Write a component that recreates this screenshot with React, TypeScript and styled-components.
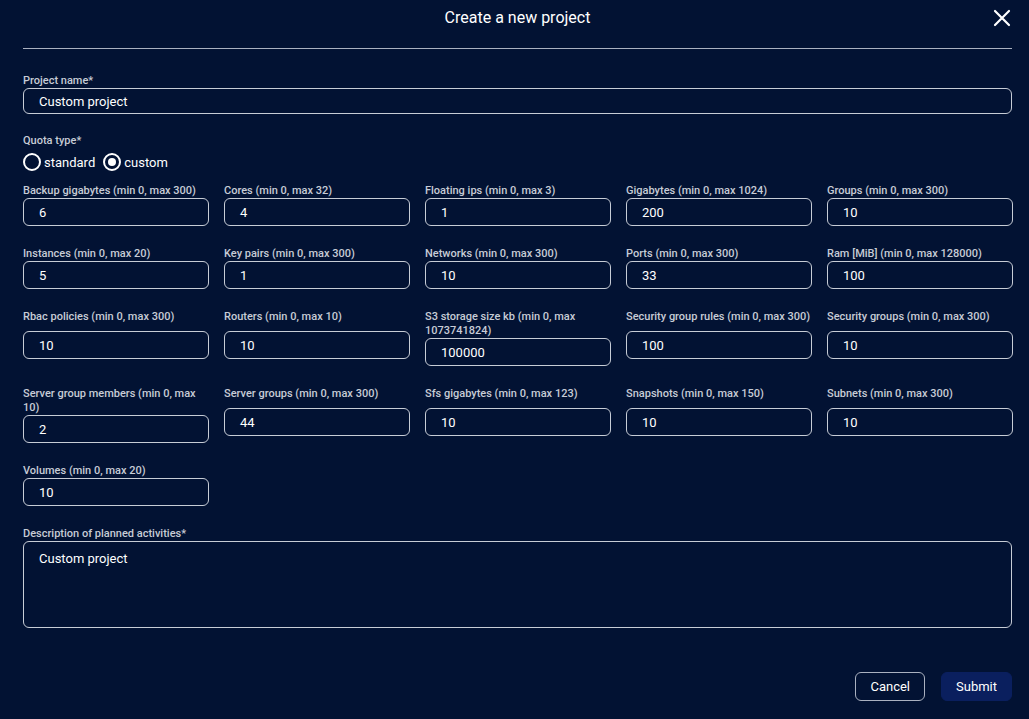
import React from "react";
import styled, { createGlobalStyle } from "styled-components";

const Global = createGlobalStyle`
  html, body { margin: 0; background: #021233; }
  body { font-family: Roboto, "Liberation Sans", sans-serif; color: #fff; }
  * { box-sizing: border-box; }
`;

const Page = styled.div`
  width: 1029px; height: 719px; padding: 0 17px 0 23px;
  display: flex; flex-direction: column;
`;
const Header = styled.div`
  position: relative; height: 49px; border-bottom: 1px solid #aab1c0;
  display: flex; justify-content: center; padding-top: 8px;
  font-size: 16px; color: #fff;
`;
const Close = styled.button`
  position: absolute; right: 0; top: 8px; background: none; border: 0; padding: 0;
  width: 20px; height: 20px; cursor: pointer;
`;
const Label = styled.div`
  font-size: 11px; line-height: 14px; color: #c7ccd6; font-weight: 500;
`;
const Input = styled.div<{ $h?: number }>`
  height: ${p => p.$h ?? 28}px; border: 1px solid #c7ccd6; border-radius: 6px;
  padding: 0 15px; display: flex; align-items: center; font-size: 13px; color: #fff;
`;
const TextArea = styled(Input)`
  align-items: flex-start; padding-top: 9px;
`;
const Section = styled.div<{ $mt: number }>`
  margin-top: ${p => p.$mt}px; display: flex; flex-direction: column; gap: 0px;
`;
const Radios = styled.div`
  display: flex; align-items: center; gap: 8px; margin-top: 5px; font-size: 13px;
`;
const Radio = styled.span<{ $on?: boolean }>`
  width: 18px; height: 18px; border-radius: 50%; border: 2px solid #fff;
  display: inline-flex; align-items: center; justify-content: center; margin-right: 3px;
  &::after { content: ""; width: 8px; height: 8px; border-radius: 50%; background: ${p => p.$on ? "#fff" : "transparent"}; }
`;
const Opt = styled.label` display: flex; align-items: center; margin-right: 0px; `;
const Grid = styled.div`
  margin-top: 13px; display: grid; grid-template-columns: repeat(5, 186px);
  column-gap: 15px; row-gap: 21px;
`;
const Cell = styled.div` display: flex; flex-direction: column; `;
const Slot = styled.div` flex: 1; display: flex; flex-direction: column; justify-content: center; `;
const Footer = styled.div`
  margin-top: auto; margin-bottom: 18px; display: flex; justify-content: flex-end; gap: 16px;
`;
const Btn = styled.button<{ $primary?: boolean }>`
  height: 29px; padding: 0 14px; border-radius: 6px; font-family: inherit; font-size: 13px;
  color: #fff; background: ${p => p.$primary ? "#0a1f5e" : "transparent"};
  border: 1px solid ${p => p.$primary ? "#0a1f5e" : "#aab1c0"};
`;

const fields: [string, string][] = [
  ["Backup gigabytes (min 0, max 300)", "6"], ["Cores (min 0, max 32)", "4"], ["Floating ips (min 0, max 3)", "1"], ["Gigabytes (min 0, max 1024)", "200"], ["Groups (min 0, max 300)", "10"],
  ["Instances (min 0, max 20)", "5"], ["Key pairs (min 0, max 300)", "1"], ["Networks (min 0, max 300)", "10"], ["Ports (min 0, max 300)", "33"], ["Ram [MiB] (min 0, max 128000)", "100"],
  ["Rbac policies (min 0, max 300)", "10"], ["Routers (min 0, max 10)", "10"], ["S3 storage size kb (min 0, max 1073741824)", "100000"], ["Security group rules (min 0, max 300)", "100"], ["Security groups (min 0, max 300)", "10"],
  ["Server group members (min 0, max 10)", "2"], ["Server groups (min 0, max 300)", "44"], ["Sfs gigabytes (min 0, max 123)", "10"], ["Snapshots (min 0, max 150)", "10"], ["Subnets (min 0, max 300)", "10"],
  ["Volumes (min 0, max 20)", "10"],
];

export default function App() {
  return (
    <Page>
      <Global />
      <Header>
        Create a new project
        <Close aria-label="close">
          <svg width="20" height="20" viewBox="0 0 20 20"><path d="M3 3L17 17M17 3L3 17" stroke="#fff" strokeWidth="2.2" strokeLinecap="round" /></svg>
        </Close>
      </Header>
      <Section $mt={25}>
        <Label>Project name*</Label>
        <Input $h={26}>Custom project</Input>
      </Section>
      <Section $mt={20}>
        <Label>Quota type*</Label>
        <Radios>
          <Opt><Radio />standard</Opt>
          <Opt><Radio $on />custom</Opt>
        </Radios>
      </Section>
      <Grid>
        {fields.map(([l, v]) => (
          <Cell key={l}>
            <Label>{l}</Label>
            <Slot><Input>{v}</Input></Slot>
          </Cell>
        ))}
      </Grid>
      <Section $mt={21}>
        <Label>Description of planned activities*</Label>
        <TextArea $h={87}>Custom project</TextArea>
      </Section>
      <Footer>
        <Btn>Cancel</Btn>
        <Btn $primary>Submit</Btn>
      </Footer>
    </Page>
  );
}
